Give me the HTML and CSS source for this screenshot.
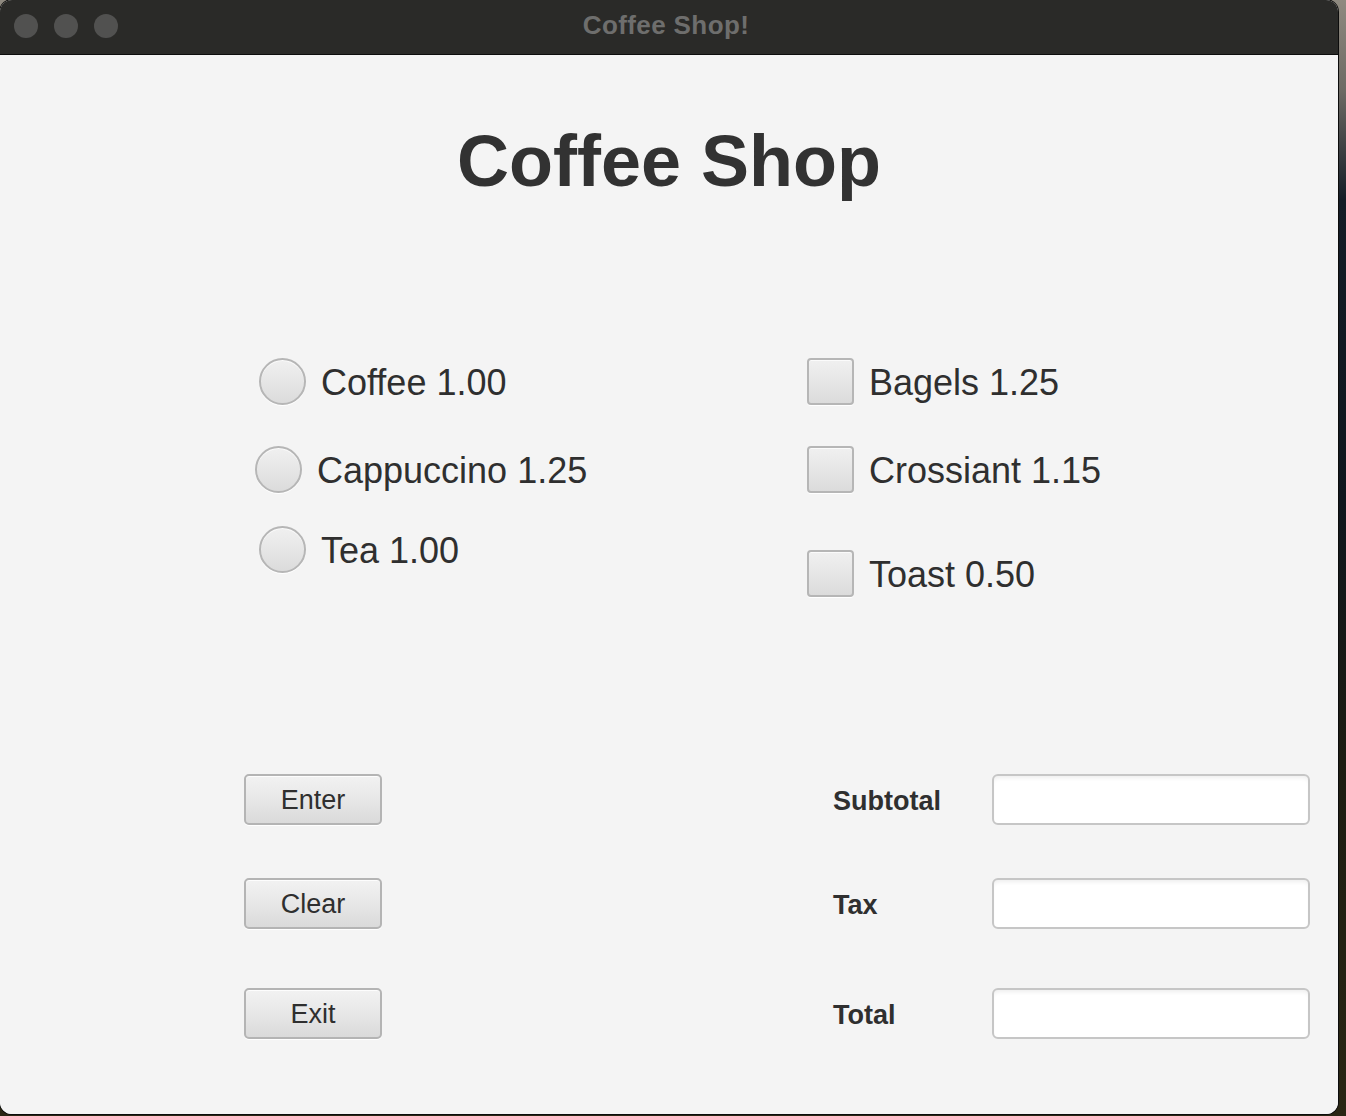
FILE: index.html
```html
<!DOCTYPE html>
<html>
<head>
<meta charset="utf-8">
<title>Coffee Shop!</title>
<link rel="stylesheet" href="styles.css">
</head>
<body>
<div class="desktop">
  <div class="window">
    <div class="titlebar">
      <div class="lights">
        <span class="light"></span>
        <span class="light"></span>
        <span class="light"></span>
      </div>
      <div class="wintitle">Coffee Shop!</div>
      <div></div>
    </div>
    <div class="content">
      <h1 class="heading">Coffee Shop</h1>

      <div class="options">
        <div class="col col-left">
          <div class="opt">
            <span class="radio"></span><span class="opt-label">Coffee 1.00</span>
          </div>
          <div class="opt opt-shift gap-42">
            <span class="radio"></span><span class="opt-label">Cappuccino 1.25</span>
          </div>
          <div class="opt gap-34">
            <span class="radio"></span><span class="opt-label">Tea 1.00</span>
          </div>
        </div>
        <div class="col col-right">
          <div class="opt">
            <span class="check"></span><span class="opt-label">Bagels 1.25</span>
          </div>
          <div class="opt gap-42">
            <span class="check"></span><span class="opt-label">Crossiant 1.15</span>
          </div>
          <div class="opt gap-58">
            <span class="check"></span><span class="opt-label">Toast 0.50</span>
          </div>
        </div>
      </div>

      <div class="form">
        <div class="form-row">
          <button class="btn">Enter</button>
          <span></span>
          <span class="field-label">Subtotal</span>
          <span class="field"></span>
        </div>
        <div class="form-row row-gap-53">
          <button class="btn">Clear</button>
          <span></span>
          <span class="field-label">Tax</span>
          <span class="field"></span>
        </div>
        <div class="form-row row-gap-59">
          <button class="btn">Exit</button>
          <span></span>
          <span class="field-label">Total</span>
          <span class="field"></span>
        </div>
      </div>
    </div>
  </div>
</div>
</body>
</html>
```

FILE: styles.css
```css
html, body {
  margin: 0;
  padding: 0;
}

body {
  width: 1346px;
  height: 1116px;
  overflow: hidden;
  background: linear-gradient(180deg, #8f8a80 0px, #6d6a64 90px, #141c26 200px, #10161d 500px, #1d1c12 760px, #2a2614 1116px);
  font-family: "Liberation Sans", Arial, sans-serif;
}

.desktop {
  width: 1346px;
  height: 1116px;
}

.window {
  width: 1338px;
  height: 1114px;
  border-radius: 12px;
  overflow: hidden;
  background: #f4f4f4;
  display: flex;
  flex-direction: column;
  box-shadow: 0 0 0 1px #0c0c0c;
}

.titlebar {
  height: 54px;
  flex: 0 0 54px;
  background: #2a2a28;
  border-bottom: 1px solid #0d0d0d;
  display: grid;
  grid-template-columns: 1fr auto 1fr;
  align-items: center;
}

.lights {
  display: flex;
  gap: 16px;
  padding-left: 14px;
  padding-bottom: 3px;
}

.light {
  width: 24px;
  height: 24px;
  border-radius: 50%;
  background: #515150;
}

.wintitle {
  font-family: "Liberation Sans", Arial, sans-serif;
  font-weight: bold;
  font-size: 26px;
  letter-spacing: 0.4px;
  color: #6e6e6d;
  padding-bottom: 4px;
  padding-right: 6px;
}

.content {
  flex: 1;
  display: flex;
  flex-direction: column;
  background: #f4f4f4;
}

.heading {
  margin: 70px 0 0 0;
  font-family: "Liberation Sans", Arial, sans-serif;
  font-weight: bold;
  font-size: 72px;
  line-height: 72px;
  color: #323232;
  text-align: center;
}

.options {
  margin-top: 161px;
  display: flex;
}

.col {
  display: flex;
  flex-direction: column;
}

.col-left {
  margin-left: 259px;
  width: 548px;
}

.opt {
  display: flex;
  align-items: center;
  height: 47px;
  gap: 15px;
}

.opt-shift {
  margin-left: -4px;
}

.gap-42 { margin-top: 41px; }
.gap-34 { margin-top: 33px; }
.gap-58 { margin-top: 57px; }

.opt-label {
  font-size: 36px;
  color: #2f2f2f;
  line-height: 46px;
  padding-top: 2px;
  white-space: nowrap;
}

.radio {
  width: 43px;
  height: 43px;
  flex: 0 0 43px;
  border: 2px solid #b6b6b6;
  border-radius: 50%;
  background: linear-gradient(180deg, #f0f0f0 0%, #e6e6e6 50%, #dbdbdb 100%);
  box-shadow: 0 1px 0 #ffffff, inset 0 1px 0 #fbfbfb;
}

.check {
  width: 43px;
  height: 43px;
  flex: 0 0 43px;
  border: 2px solid #b6b6b6;
  border-radius: 4px;
  background: linear-gradient(180deg, #f0f0f0 0%, #e6e6e6 50%, #dbdbdb 100%);
  box-shadow: 0 1px 0 #ffffff, inset 0 1px 0 #fbfbfb;
}

.form {
  margin-top: 177px;
  display: flex;
  flex-direction: column;
  padding-left: 244px;
}

.form-row {
  display: grid;
  grid-template-columns: 138px 451px 159px 318px;
  align-items: center;
  height: 51px;
}

.row-gap-53 { margin-top: 53px; }
.row-gap-59 { margin-top: 59px; }

.btn {
  width: 138px;
  height: 51px;
  box-sizing: border-box;
  border: 2px solid #b4b4b4;
  border-radius: 5px;
  background: linear-gradient(180deg, #f2f2f2 0%, #e7e7e7 50%, #dadada 100%);
  box-shadow: inset 0 1px 0 #fdfdfd, 0 1px 0 #ffffff;
  font-family: "Liberation Sans", Arial, sans-serif;
  font-size: 27px;
  color: #2f2f2f;
  padding: 2px 0 0 0;
  line-height: 45px;
}

.field-label {
  font-weight: bold;
  font-size: 27px;
  color: #2f2f2f;
  padding-top: 3px;
}

.field {
  display: block;
  width: 318px;
  height: 51px;
  box-sizing: border-box;
  border: 2px solid #c6c6c6;
  border-radius: 6px;
  background: #ffffff;
  box-shadow: inset 0 4px 4px -2px rgba(0, 0, 0, 0.07);
}
```
